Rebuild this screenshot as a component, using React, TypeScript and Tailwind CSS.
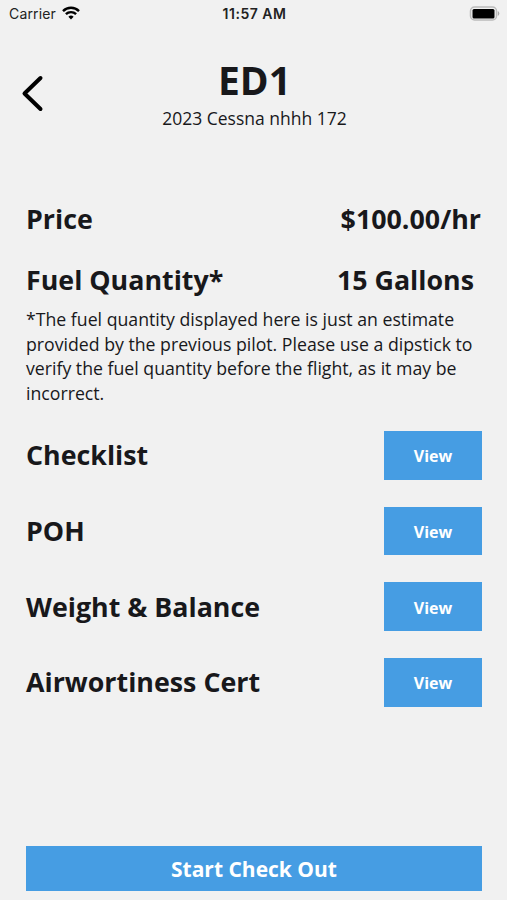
const documents = ["Checklist", "POH", "Weight & Balance", "Airwortiness Cert"];

function StatusBar() {
  return (
    <div className="grid h-7 grid-cols-3 items-center pr-[7px] pb-0.5 pl-[9px] font-['Inter',sans-serif] text-[14px] text-[#222]">
      <div className="flex items-center gap-1.5">
        <span className="tracking-[0.15px]">Carrier</span>
        <svg width="18" height="14" viewBox="0 0 18 14">
          <path d="M9 13.5 6.4 10.8a3.7 3.7 0 0 1 5.2 0Z" fill="#000" />
          <path
            d="M3.9 8.2a7.2 7.2 0 0 1 10.2 0M1 5.1a11.3 11.3 0 0 1 16 0"
            fill="none"
            stroke="#000"
            strokeWidth="2.4"
          />
        </svg>
      </div>
      <span className="text-center font-semibold tracking-[0.5px]">11:57 AM</span>
      <svg className="justify-self-end" width="31" height="15" viewBox="0 0 31 15">
        <rect x="1.5" y="1" width="26" height="13" rx="4" fill="none" stroke="#bbb" strokeWidth="1.5" />
        <rect x="3.5" y="3" width="22" height="9.5" rx="1.5" fill="#000" />
        <path d="M28.8 5a2.8 2.8 0 0 1 0 5Z" fill="#aaa" />
      </svg>
    </div>
  );
}

function Header() {
  return (
    <header className="grid grid-cols-[60px_1fr_60px] pt-[25px]">
      <button aria-label="Back" className="mt-[20px] ml-[19px] size-fit">
        <svg width="26" height="40" viewBox="0 0 26 40" fill="none">
          <path d="M21.5 5 5.5 20.5 21.5 36" stroke="#000" strokeWidth="4" strokeLinecap="round" strokeLinejoin="round" />
        </svg>
      </button>
      <div className="pl-[2px] text-center">
        <h1 className="text-[39px] leading-[54px] font-bold">ED1</h1>
        <p className="text-[17.5px] leading-[22px]">2023 Cessna nhhh 172</p>
      </div>
    </header>
  );
}

export default function App() {
  return (
    <div className="flex h-[900px] w-[507px] flex-col overflow-hidden bg-[#f1f1f1] font-['Open_Sans',sans-serif] text-[#18181b]">
      <StatusBar />
      <Header />
      <main className="pt-[72px] pr-[25px] pl-[26px]">
        <div className="flex justify-between pr-px text-[26.8px] leading-[36px] font-bold">
          <h2>Price</h2>
          <span>$100.00/hr</span>
        </div>
        <div className="mt-[25px] flex justify-between pr-2 text-[26.8px] leading-[36px] font-bold">
          <h2>Fuel Quantity*</h2>
          <span>15 Gallons</span>
        </div>
        <p className="mt-[9px] text-[17.7px] leading-[24.5px] whitespace-nowrap">
          *The fuel quantity displayed here is just an estimate
          <br />
          provided by the previous pilot. Please use a dipstick to
          <br />
          verify the fuel quantity before the flight, as it may be
          <br />
          incorrect.
        </p>
        <div className="mt-[26px] flex flex-col gap-[27px]">
          {documents.map((title) => (
            <div key={title} className="flex items-center justify-between">
              <h2 className="text-[26.8px] leading-[36px] font-bold">{title}</h2>
              <button className="h-[48.7px] w-[98px] bg-[#469de3] pt-0.5 text-[16px] font-bold text-white">View</button>
            </div>
          ))}
        </div>
      </main>
      <button className="mr-[25px] mt-auto mb-[9px] ml-[26px] h-[45px] shrink-0 bg-[#469de3] pt-0.5 text-[21px] font-bold text-white">
        Start Check Out
      </button>
    </div>
  );
}
